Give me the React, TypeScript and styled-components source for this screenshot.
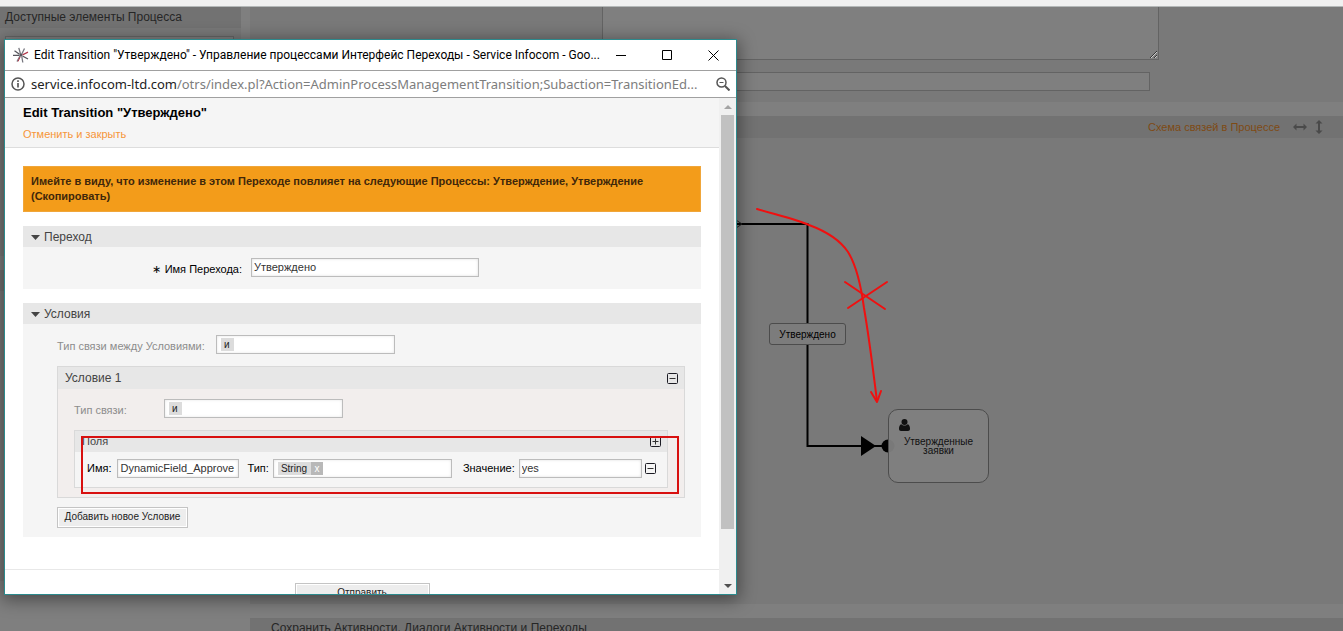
import React from "react";
import styled, { createGlobalStyle } from "styled-components";

const GlobalStyle = createGlobalStyle`
  *, *::before, *::after { box-sizing: border-box; }
  html, body { margin: 0; padding: 0; }
  body {
    background: #7f7f7f;
    color: #000;
    font-family: "Liberation Sans", Arial, sans-serif;
    font-size: 11px;
    line-height: 15px;
  }
  h1, h2, h3, p { margin: 0; font-weight: normal; }
  button, input, select, textarea { font-family: inherit; margin: 0; border-radius: 0; }
  svg { flex: none; }
`;

/* ---------- dimmed page behind the popup ---------- */

const Page = styled.div`
  position: relative;
  height: 100vh;
  min-width: 1180px;
  overflow: hidden;
`;

const TopStrip = styled.div`
  height: 7px;
  background: #f0f0f0;
  border-bottom: 1px solid #b4b8b8;
`;

const Columns = styled.div`
  display: flex;
  gap: 9px;
`;

const Sidebar = styled.aside`
  flex: 0 0 241px;
  display: flex;
  flex-direction: column;
  gap: 14px;
`;

const MainColumn = styled.main`
  flex: 1;
  min-width: 0;
  display: flex;
  flex-direction: column;
  gap: 14px;
`;

const Panel = styled.section`
  background: #797979;
`;

const PanelBar = styled.header<{ $inset?: number }>`
  display: flex;
  align-items: center;
  height: 21px;
  padding: 0 ${(p) => p.$inset ?? 5}px;
  background: #727272;
  color: #262626;
  font-size: 12px;
`;

const SidebarBody = styled.div<{ $height: number }>`
  height: ${(p) => p.$height}px;
  padding: 8px 7px 0 5px;
`;

const FilterBox = styled.input`
  display: block;
  width: 100%;
  height: 19px;
  border: 1px solid #666;
  background: #7f7f7f;
`;

const ProcessForm = styled.div`
  display: flex;
  flex-direction: column;
  align-items: flex-start;
  gap: 12px;
  height: 95px;
  padding-left: 352px;
`;

const Description = styled.textarea`
  display: block;
  width: 557px;
  height: 53px;
  border: 1px solid #636363;
  border-top: 0;
  background: #7f7f7f;
  resize: both;
`;

const ProcessField = styled.input`
  display: block;
  width: 548px;
  height: 19px;
  border: 1px solid #636363;
  background: #7f7f7f;
`;

const CanvasBar = styled(PanelBar)`
  height: 22px;
  justify-content: flex-end;
  padding-right: 20px;
  gap: 13px;
  font-size: 11px;
`;

const SchemeLink = styled.a`
  color: #7f4a14;
  text-decoration: none;
`;

const ResizeIcons = styled.span`
  display: flex;
  align-items: center;
  gap: 8px;
`;

const Canvas = styled.div`
  position: relative;
  height: 466px;
  background: #797979;
`;

const Drawing = styled.svg`
  position: absolute;
  inset: 0;
  width: 100%;
  height: 100%;
`;

const TransitionLabel = styled.div`
  position: absolute;
  left: 519px;
  top: 185px;
  width: 77px;
  height: 22px;
  border: 1px solid #4c4c4c;
  border-radius: 3px;
  background: #7c7c7c;
  font-size: 10px;
  line-height: 22px;
  text-align: center;
`;

const ActivityCard = styled.div`
  position: absolute;
  left: 638px;
  top: 271px;
  width: 101px;
  height: 74px;
  padding: 9px 10px;
  border: 1px solid #4c4c4c;
  border-radius: 10px;
  background: rgba(127, 127, 127, 0.95);
  color: #111;
  font-size: 10px;
  line-height: 9px;
  text-align: center;

  svg { display: block; margin-bottom: 6px; }
`;

/* ---------- popup window ---------- */

const PopupWindow = styled.div`
  position: absolute;
  left: 4px;
  top: 39px;
  width: 733px;
  height: 556px;
  display: flex;
  flex-direction: column;
  border: 1px solid #2c8a8d;
  background: #fff;
  box-shadow: 0 3px 16px 2px rgba(0, 0, 0, 0.42);
`;

const TitleBar = styled.div`
  display: flex;
  align-items: center;
  height: 31px;
  flex: none;
  padding-left: 8px;
  border-bottom: 1px solid #a0a0a0;
  font-family: Roboto, "Noto Sans", sans-serif;
  font-size: 12px;
`;

const TitleText = styled.span`
  flex: 1;
  min-width: 0;
  margin-left: 5px;
  white-space: nowrap;
`;

const WindowButton = styled.button`
  display: flex;
  align-items: center;
  justify-content: center;
  width: 46px;
  height: 30px;
  padding: 0;
  border: 0;
  background: none;
`;

const AddressBar = styled.div`
  display: flex;
  align-items: center;
  height: 27px;
  flex: none;
  padding: 0 6px;
  border-bottom: 1px solid #a0a0a0;
  color: #7d7d7d;
  font-family: "Noto Sans", "Open Sans", sans-serif;
  font-size: 13px;
`;

const Address = styled.span`
  flex: 1;
  margin-left: 6px;
  white-space: nowrap;

  b { color: #222; font-weight: normal; }
`;

const Viewport = styled.div`
  flex: 1;
  min-height: 0;
  display: flex;
`;

const Document = styled.div`
  flex: 1;
  min-width: 0;
  overflow: hidden;
`;

const ScrollTrack = styled.div`
  flex: 0 0 17px;
  display: flex;
  flex-direction: column;
  background: #f0f0f0;
`;

const ScrollButton = styled.button`
  display: flex;
  align-items: center;
  justify-content: center;
  height: 17px;
  padding: 0;
  border: 0;
  background: none;
`;

const ScrollRail = styled.div`
  flex: 1;
  padding: 0 2px;
`;

const ScrollThumb = styled.div`
  height: calc(100% - 48px);
  background: #c1c1c1;
`;

const DocHeader = styled.header`
  height: 50px;
  padding: 7px 18px 0;
  border-bottom: 1px solid #ddd;
  background: #f5f5f5;
`;

const DocTitle = styled.h1`
  font-size: 13px;
  font-weight: bold;
  line-height: 15px;
`;

const CancelLink = styled.a`
  display: inline-block;
  margin-top: 7px;
  color: #f5953a;
  text-decoration: none;
`;

const DocBody = styled.form`
  display: flex;
  flex-direction: column;
  gap: 14px;
  padding: 18px 18px 32px;
`;

const Notice = styled.p`
  padding: 7px;
  border: 1px solid #f0a63a;
  background: #f39c1a;
  color: #40270a;
  font-weight: bold;
`;

const Widget = styled.section`
  background: #f5f5f5;
`;

const WidgetHeader = styled.h2`
  display: flex;
  align-items: center;
  gap: 4px;
  height: 21px;
  padding: 2px 8px 0;
  background: #e7e7e7;
  color: #444;
  font-size: 12px;
`;

const NameRow = styled.div`
  display: flex;
  align-items: center;
  gap: 9px;
  padding: 11px 0 12px;
`;

const NameLabel = styled.label`
  width: 219px;
  padding-top: 3px;
  text-align: right;
`;

const Star = styled.span`
  margin-right: 1px;
`;

const TextInput = styled.input<{ $width: number }>`
  width: ${(p) => p.$width}px;
  height: 19px;
  padding: 0 2px 2px;
  border: 1px solid #bcbcbc;
  background: #fff;
  box-shadow: inset 0 0 3px #ddd;
  color: #333;
  font-size: 11px;
`;

const ConditionsBody = styled.div`
  padding: 11px 16px 9px 34px;
`;

const LinkRow = styled.div<{ $inset?: boolean }>`
  display: flex;
  align-items: center;
  padding: ${(p) => (p.$inset ? "10px 0 12px" : "0 0 12px")};
`;

const LinkLabel = styled.label<{ $width: number }>`
  width: ${(p) => p.$width}px;
  padding-top: 4px;
  color: #8c8c8c;
`;

const ChoiceWrap = styled.span`
  position: relative;
  display: inline-flex;
`;

const Choice = styled.select<{ $chip: number }>`
  appearance: none;
  width: 179px;
  height: 19px;
  padding: 0 0 0 7px;
  border: 1px solid #bcbcbc;
  background: linear-gradient(#dcdcdc, #dcdcdc) 4px 2px / ${(p) => p.$chip}px 13px no-repeat #fff;
  box-shadow: inset 0 0 3px #e4e4e4;
  color: #222;
  font-size: 10px;
`;

const ChipRemove = styled.button`
  position: absolute;
  left: 38px;
  top: 3px;
  width: 12px;
  height: 13px;
  padding: 0;
  border: 0;
  background: #b8b8b8;
  color: #fff;
  font-size: 10px;
  line-height: 12px;
`;

const ConditionBox = styled.section`
  border: 1px solid #d9d9d9;
  background: #f2eeed;
`;

const ConditionHeader = styled.h3`
  display: flex;
  align-items: center;
  justify-content: space-between;
  height: 22px;
  padding: 0 6px 0 7px;
  background: #e7e7e7;
  color: #444;
  font-size: 12px;
`;

const ConditionBody = styled.div`
  padding: 0 16px 9px;
`;

const FieldsBox = styled.section`
  border: 1px solid #d9d9d9;
  background: #f5f5f5;
`;

const FieldsHeader = styled(ConditionHeader)`
  height: 21px;
  font-size: 11px;
`;

const FieldRow = styled.div`
  display: flex;
  align-items: center;
  padding: 7px 12px 9px;
`;

const FieldLabel = styled.label<{ $start?: number; $gap?: number }>`
  display: flex;
  align-items: center;
  gap: ${(p) => p.$gap ?? 6}px;
  margin-left: ${(p) => p.$start ?? 0}px;
`;

const IconButton = styled.button`
  display: flex;
  padding: 0;
  border: 0;
  background: none;
`;

const RemoveField = styled(IconButton)`
  margin-left: 3px;
`;

const PushButton = styled.button<{ $width: number }>`
  display: block;
  width: ${(p) => p.$width}px;
  height: 21px;
  padding: 0 0 2px;
  border: 1px solid #c4c4c4;
  background: #ededed;
  box-shadow: inset 0 0 0 1px #fff;
  color: #222;
  font-size: 10px;
  line-height: 17px;
`;

const AddRow = styled.div`
  padding-top: 9px;
`;

const DocFooter = styled.footer`
  display: flex;
  justify-content: center;
  padding: 13px 0;
  border-top: 1px solid #e8e8e8;
`;

const Highlight = styled.div`
  position: absolute;
  left: 76px;
  top: 396px;
  width: 598px;
  height: 58px;
  border: 2px solid #d8100f;
  pointer-events: none;
`;

/* ---------- drawings ---------- */

const Logo = () => (
  <svg width="16" height="16" viewBox="0 0 16 16" fill="none" strokeWidth="1.3" aria-hidden="true">
    <path d="M7.500 7 5.800.8M8.800 7l2.700-5.500M7 9l-3 5.500M8.800 9.500 9.800 15.500" stroke="#77777f" />
    <path d="M6.500 7.200 1.500 3.800M6.500 8.300H0M9.500 9l5.500 3" stroke="#55555c" />
    <path d="M9.500 7.800 15 5.200" stroke="#b5394c" />
    <path d="M7.200 9.800 5 14.500" stroke="#b5394c" strokeWidth="1" />
    <circle cx="8" cy="8" r="1.500" fill="#55555c" />
  </svg>
);

const Caret = () => (
  <svg width="9" height="5" viewBox="0 0 9 5" aria-hidden="true">
    <path d="M0 0h9L4.500 5z" fill="#444" />
  </svg>
);

const BoxSign = ({ plus }: { plus?: boolean }) => (
  <svg width="11" height="11" viewBox="0 0 11 11" fill="none" aria-hidden="true">
    <rect x=".5" y=".5" width="10" height="10" rx="1" stroke="#1c1c24" />
    <path d={plus ? "M2.500 5.500h6M5.500 2.500v6" : "M2.500 5.500h6"} stroke="#333" />
  </svg>
);

const App = () => (
  <>
    <GlobalStyle />
    <Page>
      <TopStrip />
      <Columns>
        <Sidebar>
          <Panel>
            <PanelBar>Доступные элементы Процесса</PanelBar>
            <SidebarBody $height={228}>
              <FilterBox aria-label="Фильтр" />
            </SidebarBody>
          </Panel>
          <Panel>
            <PanelBar />
            <SidebarBody $height={290} />
          </Panel>
        </Sidebar>
        <MainColumn>
          <Panel>
            <ProcessForm>
              <Description aria-label="Описание" />
              <ProcessField aria-label="Состояние" />
            </ProcessForm>
          </Panel>
          <Panel>
            <CanvasBar>
              <SchemeLink href="#">Схема связей в Процессе</SchemeLink>
              <ResizeIcons>
                <svg width="14" height="8" viewBox="0 0 14 8" aria-hidden="true">
                  <path d="M0 4l3.500-3.500V3h7V.5L14 4l-3.500 3.500V5h-7v2.500z" fill="#4a4a4a" />
                </svg>
                <svg width="8" height="14" viewBox="0 0 8 14" aria-hidden="true">
                  <path d="M4 0l3.500 3.500H5v7h2.500L4 14 .5 10.500H3v-7H.5z" fill="#4a4a4a" />
                </svg>
              </ResizeIcons>
            </CanvasBar>
            <Canvas>
              <Drawing aria-hidden="true">
                <path d="M486 86H557.500V308H632" fill="none" stroke="#000" strokeWidth="2" />
                <path d="M486 82l6 4-6 4" fill="none" stroke="#222" />
                <path d="M611 298l15 10-15 10z" />
                <circle cx="638" cy="308" r="6.500" />
              </Drawing>
              <TransitionLabel>Утверждено</TransitionLabel>
              <ActivityCard>
                <svg width="11" height="12" viewBox="0 0 11 12" aria-hidden="true">
                  <circle cx="5.500" cy="3" r="3" fill="#111" />
                  <path d="M2.300 5.200C.6 5.700 0 7.500 0 9.800 0 11.200.8 12 2 12h7c1.200 0 2-.8 2-2.200 0-2.300-.6-4.100-2.300-4.600-.9.900-1.900 1.400-3.200 1.400S3.200 6.100 2.300 5.200z" fill="#111" />
                </svg>
                Утвержденные заявки
              </ActivityCard>
              <Drawing aria-hidden="true">
                <g fill="none" stroke="#f01010" strokeWidth="2" strokeLinecap="round" strokeLinejoin="round">
                  <path d="M507 71C531 78 548 82 559 87C578 94 590 102 598 114C608 130 612 155 614 170C620 205 624 240 627 263" />
                  <path d="M595 144l40 27M637 144l-39 26M621 254l6 10 4-11" />
                </g>
              </Drawing>
            </Canvas>
          </Panel>
          <Panel>
            <PanelBar $inset={21}>Сохранить Активности, Диалоги Активности и Переходы</PanelBar>
          </Panel>
        </MainColumn>
      </Columns>

      <PopupWindow>
        <TitleBar>
          <Logo />
          <TitleText>
            Edit Transition "Утверждено" - Управление процессами Интерфейс Переходы - Service Infocom - Goo...
          </TitleText>
          <WindowButton aria-label="Свернуть">
            <svg width="10" height="10" viewBox="0 0 10 10"><path d="M0 5.500h10" stroke="#000" /></svg>
          </WindowButton>
          <WindowButton aria-label="Развернуть">
            <svg width="10" height="10" viewBox="0 0 10 10"><path d="M.5.5h9v9h-9z" fill="none" stroke="#000" /></svg>
          </WindowButton>
          <WindowButton aria-label="Закрыть">
            <svg width="11" height="11" viewBox="0 0 11 11"><path d="M.5.5l10 10M10.500.5l-10 10" stroke="#000" /></svg>
          </WindowButton>
        </TitleBar>
        <AddressBar>
          <svg width="14" height="14" viewBox="0 0 14 14" fill="none" stroke="#555" strokeWidth="1.500" aria-hidden="true">
            <circle cx="7" cy="7" r="6" />
            <path d="M7 6v4.500M7 3.300v1.600" stroke="#444" />
          </svg>
          <Address>
            <b>service.infocom-ltd.com</b>/otrs/index.pl?Action=AdminProcessManagementTransition;Subaction=TransitionEd...
          </Address>
          <svg width="14" height="14" viewBox="0 0 14 14" fill="none" stroke="#555" strokeWidth="1.500" aria-hidden="true">
            <circle cx="5.500" cy="5.500" r="4.500" />
            <path d="M9 9l4.500 4.500" strokeWidth="2" />
            <path d="M3.500 5.500h4" strokeWidth="1" />
          </svg>
        </AddressBar>
        <Viewport>
          <Document>
            <DocHeader>
              <DocTitle>Edit Transition "Утверждено"</DocTitle>
              <CancelLink href="#">Отменить и закрыть</CancelLink>
            </DocHeader>
            <DocBody>
              <Notice>
                Имейте в виду, что изменение в этом Переходе повлияет на следующие Процессы: Утверждение, Утверждение (Скопировать)
              </Notice>
              <Widget>
                <WidgetHeader><Caret />Переход</WidgetHeader>
                <NameRow>
                  <NameLabel htmlFor="name"><Star>∗</Star> Имя Перехода:</NameLabel>
                  <TextInput id="name" $width={228} defaultValue="Утверждено" />
                </NameRow>
              </Widget>
              <Widget>
                <WidgetHeader><Caret />Условия</WidgetHeader>
                <ConditionsBody>
                  <LinkRow>
                    <LinkLabel $width={159} htmlFor="overall">Тип связи между Условиями:</LinkLabel>
                    <Choice id="overall" $chip={13} defaultValue="and"><option value="and">и</option></Choice>
                  </LinkRow>
                  <ConditionBox>
                    <ConditionHeader>
                      Условие 1
                      <IconButton type="button" aria-label="Удалить условие"><BoxSign /></IconButton>
                    </ConditionHeader>
                    <ConditionBody>
                      <LinkRow $inset>
                        <LinkLabel $width={90} htmlFor="single">Тип связи:</LinkLabel>
                        <Choice id="single" $chip={13} defaultValue="and"><option value="and">и</option></Choice>
                      </LinkRow>
                      <FieldsBox>
                        <FieldsHeader>
                          Поля
                          <IconButton type="button" aria-label="Добавить поле"><BoxSign plus /></IconButton>
                        </FieldsHeader>
                        <FieldRow>
                          <FieldLabel>Имя: <TextInput $width={122} defaultValue="DynamicField_Approve" /></FieldLabel>
                          <FieldLabel $start={8} htmlFor="type">Тип:</FieldLabel>
                          <FieldLabel as="span" $start={4}>
                            <ChoiceWrap>
                              <Choice id="type" $chip={34} defaultValue="String"><option>String</option></Choice>
                              <ChipRemove type="button">x</ChipRemove>
                            </ChoiceWrap>
                          </FieldLabel>
                          <FieldLabel $start={11} $gap={4}>Значение: <TextInput $width={123} defaultValue="yes" /></FieldLabel>
                          <RemoveField type="button" aria-label="Удалить поле"><BoxSign /></RemoveField>
                        </FieldRow>
                      </FieldsBox>
                    </ConditionBody>
                  </ConditionBox>
                  <AddRow>
                    <PushButton type="button" $width={131}>Добавить новое Условие</PushButton>
                  </AddRow>
                </ConditionsBody>
              </Widget>
            </DocBody>
            <DocFooter>
              <PushButton type="button" $width={135}>Отправить</PushButton>
            </DocFooter>
          </Document>
          <ScrollTrack>
            <ScrollButton aria-label="Вверх">
              <svg width="8" height="4" viewBox="0 0 8 4"><path d="M0 4h8L4 0z" fill="#a3a3a3" /></svg>
            </ScrollButton>
            <ScrollRail><ScrollThumb /></ScrollRail>
            <ScrollButton aria-label="Вниз">
              <svg width="8" height="4" viewBox="0 0 8 4"><path d="M0 0h8L4 4z" fill="#505050" /></svg>
            </ScrollButton>
          </ScrollTrack>
        </Viewport>
        <Highlight />
      </PopupWindow>
    </Page>
  </>
);

export default App;
